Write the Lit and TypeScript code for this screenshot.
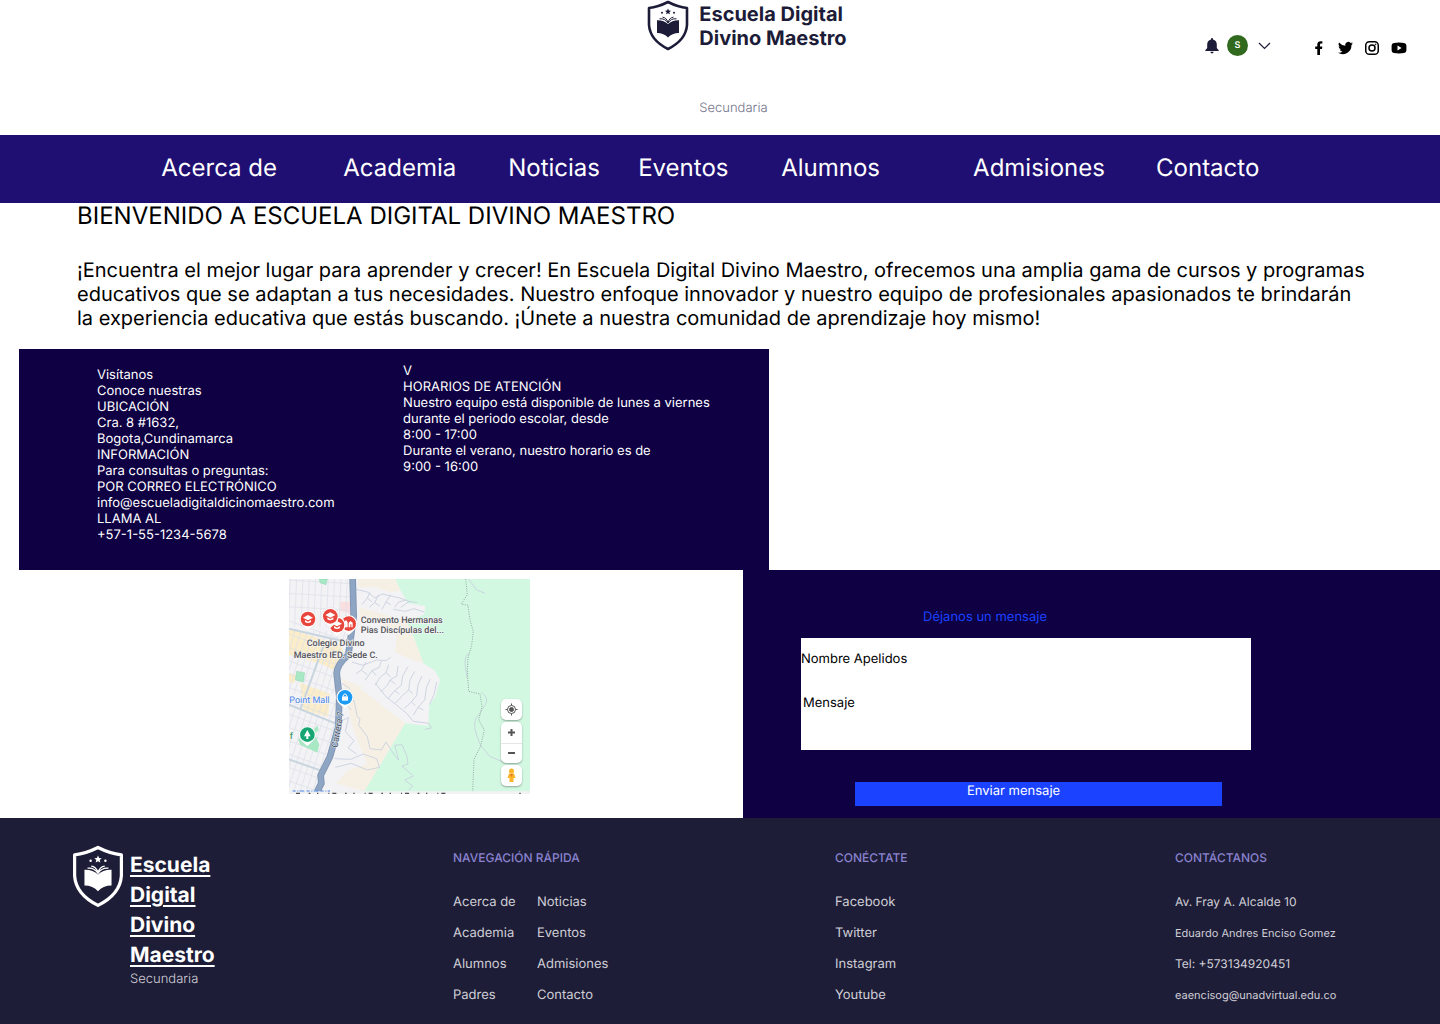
import { LitElement, html, svg, css } from "lit";
import { customElement } from "lit/decorators.js";

const SHIELD = svg`
  <path d="M21 2 Q31 7 40 8 V25 Q39 40 21 49 Q3 40 2 25 V8 Q11 7 21 2Z" fill="none" stroke="currentColor" stroke-width="2.6" stroke-linejoin="round"/>
  <path d="M21 8.6l.9 2 2.1.2-1.6 1.4.5 2.1-1.9-1.1-1.9 1.1.5-2.1-1.6-1.4 2.1-.2z" fill="currentColor"/>
  <circle cx="15" cy="12.8" r="1" fill="currentColor"/><circle cx="27" cy="12.8" r="1" fill="currentColor"/>
  <path d="M10 20.2 Q17 20 21 24 Q25 20 32 20.2 V33 Q25 33 21 37.6 Q17 33 10 33Z" fill="currentColor"/>
  <path d="M12.5 18.8 Q18 18.2 21 23 Q24 18.2 29.5 18.8 M15.5 17.2 Q19.5 17.5 21 22.5 Q22.5 17.5 26.5 17.2" fill="none" stroke="currentColor" stroke-width="1"/>`;

@customElement("school-map")
export class SchoolMap extends LitElement {
  static styles = css`
    :host { display: block; position: relative; }
    .canvas { display: block; width: 100%; height: 100%; }
    .label { font-family: Roboto, sans-serif; font-size: 27px; font-weight: 500; fill: #55555a; stroke: #f6f5f7; stroke-width: 4px; paint-order: stroke; }
    .place { fill: #4a86e8; font-weight: 400; }
    .park { fill: #3c9c6c; }
    .road { fill: #3f4856; stroke: #dfe5ee; stroke-width: 3px; font-weight: 400; }
    .controls { position: absolute; right: 8px; bottom: 8px; width: 21px; display: grid; gap: 2px; }
    .group { display: grid; background: #fff; border-radius: 5px; box-shadow: 0 1px 2px #0005; }
    .control { display: grid; place-items: center; width: 21px; height: 21px; padding: 0; border: 0; background: none; color: #555; }
    .control + .control { height: 20px; border-top: 1px solid #e6e6e6; }
  `;

  private streets() {
    const lines = [];
    for (let i = 0; i < 26; i++) {
      const x = 12 + i * 19;
      lines.push(svg`<path d="M${x} 20 l-6 150"/><path d="M${x - 5} 182 l-60 190"/><path d="M${x} 400 l-90 280"/>`);
    }
    for (let i = 0; i < 17; i++) {
      const y = 30 + i * 40;
      lines.push(svg`<path d="M20 ${y} l210 ${i < 3 ? 12 : 76}"/>`);
    }
    return lines;
  }

  private pin(x: number, y: number, color: string, glyph: unknown) {
    return svg`<g transform="translate(${x} ${y})">
      <path d="M0 35 L-14 22 A26 26 0 1 1 14 22Z" fill="#fff" stroke="#0002"/>
      <circle r="22" fill="${color}"/>${glyph}</g>`;
  }

  render() {
    const cap = svg`<path d="M-15 -4 L0 -12 L15 -4 L0 4Z M-9 3 V9 Q0 15 9 9 V3 L0 8Z" fill="#fff"/>`;
    return html`
      <svg class="canvas" viewBox="27 27 723 645" preserveAspectRatio="xMidYMid slice" role="img" aria-label="Mapa">
        <defs>
          <clipPath id="west"><path d="M27 27 H218 L221 140 L205 255 L172 290 L178 380 L172 470 L150 560 L120 620 L112 672 H27Z"/></clipPath>
        </defs>
        <path fill="#f3f2f5" d="M27 27H750V672H27Z"/>
        <path fill="#d3f8e2" d="M345 27 L362 62 L385 100 L436 108 L432 134 L378 152 L402 205 L430 280 L465 302 L480 330 L466 380 L448 405 L445 468 L375 460 L253 664 H750 V27Z"/>
        <path fill="#f6f0e4" d="M234 27 H345 L362 62 L330 66 L285 50 L236 54Z M238 112 L300 130 L378 152 L402 205 L430 280 L392 268 L345 246 L350 190 L300 160 L240 150Z M188 330 L236 352 L300 402 L375 460 L253 664 L168 640 L205 600 L262 582 L236 520 L214 460Z M180 325 L250 352 L210 362Z"/>
        <path fill="#fbdfe0" d="M180 95 H213 V132 L182 124Z"/>
        <g clip-path="url(#west)">
          <path fill="#fbedc9" d="M27 176 L182 226 L196 262 L160 300 L120 280 L27 254Z M60 338 L150 372 L144 440 L70 420Z M27 310 L50 316 L42 340 L27 336Z"/>
          <g fill="none" stroke="#dce0e8" stroke-width="2">${this.streets()}</g>
          <path fill="none" stroke="#c8d5df" stroke-width="6" d="M27 176 L190 214 M27 404 L166 460 M27 568 L140 608 M130 230 L60 420"/>
          <path fill="#a9e8c4" stroke="#74cba0" d="M50 304 L74 308 L70 336 L46 330Z M118 27 H142 L138 44 L120 38Z"/>
          <path fill="#a9e8c4" d="M100 480 L112 466 L116 480 L104 492 L118 524 L112 548 L60 524 L54 508 L66 500Z"/>
        </g>
        <g fill="none" stroke="#c6cfdd" stroke-width="2.5" stroke-linejoin="round">
          <path d="M228 58 L262 66 L285 84 L306 72 M246 104 L262 84 L270 66 M262 84 L276 96 M268 112 L284 98 L296 74 M284 98 L300 108 M306 118 L318 96 L332 74 M318 96 L332 104 M306 72 L360 84 L392 96 M344 112 L356 96 L378 90 M362 112 L388 94 L412 98 M340 118 L376 124 L402 116 L432 126"/>
          <path d="M216 276 L248 286 L290 270 L318 272 L332 262 M228 312 L244 300 L258 276 M244 300 L262 314 M256 330 L276 302 L298 292 L304 274 M276 302 L288 316 M286 346 L300 322 L318 308 L326 284 M318 308 L332 320 M302 366 L322 346 L330 330 L350 318 L354 288 M330 330 L346 342 M324 386 L344 362 L364 346 L368 318 L384 290 M344 362 L358 372 M346 400 L366 378 L386 360 L390 330 L404 304 M386 360 L398 370 M372 416 L394 396 L410 376 L414 344 L426 318 M394 396 L406 406 M400 436 L414 412 L434 390 L440 350 L450 328 M414 412 L430 420 M286 340 L318 380 L346 402 L380 430 L400 454 L446 460 L454 474 L434 478 M448 404 L462 374 L470 336"/>
          <path d="M196 372 L222 392 L232 440 L240 446 L236 466 L262 500 L270 536 L304 540 L318 516 L344 556 L356 570 L344 526 L366 524 L380 556 L384 582 L366 588 L400 618 L374 630 L398 648 L386 660"/>
          <path d="M186 452 L206 442 L196 484 L222 512 L204 534 L230 552 M164 566 L212 568 L250 552 L290 566 L298 592 L262 600 L214 580 L166 592 M186 340 L210 356 M196 400 L214 420"/>
          <path d="M566 27 L590 60 L615 70 M567 250 Q552 258 556 290 L562 326 M604 366 Q628 386 616 404 L598 432 Q574 454 590 496 L602 526 L630 560 L670 576"/>
        </g>
        <path fill="none" stroke="#7f9790" stroke-width="2.5" stroke-dasharray="3 4" d="M557 27 L562 74 L544 102 L564 106 L570 150 L580 184 L575 226 L564 264 L562 300 L566 364 L600 372 L606 410 L596 450 L613 480 L602 528 L582 568 L578 664"/>
        <path fill="none" stroke="#7d92b0" stroke-width="20" d="M218 27 L221 140 L205 255 Q172 282 170 310 L178 380 L175 470 L150 560 L122 616 L124 640 L112 664"/>
        <path fill="none" stroke="#8ea5c4" stroke-width="15" d="M218 27 L221 140 L205 255 Q172 282 170 310 L178 380 L175 470 L150 560 L122 616 L124 640 L112 664"/>
        <text class="label road" transform="translate(172 534) rotate(-80)">Carrera 7</text>
        ${this.pin(206, 161, "#e8453c", svg`<path d="M-13 11 V-4 L-8 -11 L-3 -4 V11Z M0 11 V-2 L5 -8 L12 -3 V11 H8 V2 H5 V11Z" fill="#fff"/>`)}
        ${this.pin(171, 165, "#e8453c", cap)}
        ${this.pin(84, 147, "#e8453c", cap)}
        ${this.pin(151, 139, "#e8453c", cap)}
        ${this.pin(195, 382, "#1a9bf5", svg`<path d="M-9 -3 H9 V10 H-9Z" fill="#fff"/><path d="M-5 -3 V-7 Q0 -14 5 -7 V-3" fill="none" stroke="#fff" stroke-width="3"/>`)}
        ${this.pin(82, 494, "#17a673", svg`<path d="M0 -14 L10 5 H3 V13 H-3 V5 H-10Z" fill="#fff"/>`)}
        <text class="label" x="242" y="160">Convento Hermanas</text>
        <text class="label" x="242" y="189">Pias Discípulas del...</text>
        <text class="label" x="80" y="229">Colegio Divino</text>
        <text class="label" x="41" y="264">Maestro IED. Sede C.</text>
        <text class="label place" x="28" y="398">Point Mall</text>
        <text class="label park" x="29" y="506">f</text>
        <path fill="#f1f2f3" d="M27 664H750V672H27Z"/>
        <path fill="none" stroke="#4a86e8" stroke-width="3" stroke-dasharray="9 5 3 4 14 7" d="M38 663H150"/>
        <path fill="none" stroke="#4d4d52" stroke-width="4" stroke-dasharray="12 26 5 20 4 30 3 9" d="M48 670H520M718 670H722"/>
      </svg>
      <div class="controls">
        <div class="group"><button class="control" aria-label="Mi ubicación">
          <svg width="13" height="13" viewBox="0 0 13 13" fill="none" stroke="currentColor"><circle cx="6.5" cy="6.5" r="4"/><circle cx="6.5" cy="6.5" r="2" fill="currentColor"/><path d="M6.5 .5v2M6.5 10.5v2M.5 6.5h2M10.5 6.5h2"/></svg>
        </button></div>
        <div class="group">
          <button class="control" aria-label="Acercar"><svg width="9" height="9" viewBox="0 0 9 9" stroke="currentColor" stroke-width="2"><path d="M1 4.5h7M4.5 1v7"/></svg></button>
          <button class="control" aria-label="Alejar"><svg width="9" height="9" viewBox="0 0 9 9" stroke="currentColor" stroke-width="2"><path d="M1 4h7"/></svg></button>
        </div>
        <div class="group"><button class="control" aria-label="Vista de calle">
          <svg width="11" height="15" viewBox="0 0 11 15" fill="#fbb428"><path d="M3 5.5H8L9.5 10H7.5V14H3.5V10H1.5Z"/><circle cx="5.5" cy="3" r="2.5"/><path d="M4 6h3l-1.5 3z" fill="#e07a18"/></svg>
        </button></div>
      </div>
    `;
  }
}

@customElement("app-root")
export class AppRoot extends LitElement {
  static styles = css`
    :host { display: block; background: #fff; color: #000; font-family: Inter, "Liberation Sans", sans-serif; font-size: 13px; line-height: 16px; text-rendering: geometricPrecision; }
    *, *::before, *::after { box-sizing: border-box; }
    a { color: inherit; text-decoration: none; }
    h1, h2, p, ul { margin: 0; padding: 0; font-weight: 400; list-style: none; }
    button, input, textarea { font: inherit; color: inherit; border: 0; padding: 0; background: none; text-rendering: inherit; }

    .header { display: grid; grid-template-columns: 12fr auto 11fr; min-height: 135px; }
    .brand { grid-column: 2; display: grid; grid-template-columns: auto auto; column-gap: 10px; align-content: start; color: #1d1c38; }
    .brand-name { padding-top: 2px; font-size: 20px; line-height: 24px; font-weight: 700; }
    .brand-level { grid-column: 2; padding-top: 48px; font-size: 13px; font-weight: 300; color: #74748a; }
    .account { display: flex; justify-content: flex-end; align-items: center; align-self: start; padding: 35px 33px 0 0; }
    .icon { display: grid; }
    .bell { margin-right: 8px; color: #1d1c38; }
    .avatar { display: grid; place-items: center; width: 21px; height: 21px; margin-right: 10px; border-radius: 50%; background: #316a1e; color: #fff; font-size: 9px; font-weight: 600; }
    .chevron { margin-right: 40px; color: #1d1c38; }
    .social { display: flex; gap: 11px; padding-top: 4px; }

    .nav { display: grid; grid-template-columns: 182fr 165fr 130fr 143fr 192fr 183fr 284fr; padding: 18px 0 20px 11.2%; background: #1f0f72; color: #fff; font-size: 24px; line-height: 30px; }

    .welcome { padding: 0 72px 19px 77px; font-size: 20px; line-height: 24px; }
    .welcome-title { padding-bottom: 30px; font-size: 24px; line-height: 25px; }

    .info { display: grid; grid-template-columns: 306fr 366fr; width: 52.1%; min-height: 221px; margin-left: 19px; padding: 14px 0 0 78px; background: #0e0043; color: #fff; }
    .visit { padding-top: 4px; }

    .contact { display: grid; grid-template-columns: 743fr 697fr; min-height: 248px; }
    .map { width: 241px; height: 215px; margin: 9px 0 0 289px; }
    .message { display: grid; align-content: start; padding: 39px 189px 12px 58px; background: #0e0043; }
    .message-title { padding-left: 122px; font-size: 13px; color: #1b43ff; }
    .fields { display: grid; gap: 28px; align-content: start; min-height: 112px; margin-top: 13px; padding-top: 13px; background: #fff; }
    .field { display: flex; gap: 8px; }
    .field-last { padding-left: 2px; }
    .field-input { flex: 1; min-width: 0; height: 16px; outline: 0; resize: none; }
    .field-area { height: 40px; }
    .send { height: 24px; margin: 32px 29px 0 54px; padding: 0 0 6px 112px; background: #1b43ff; color: #fff; line-height: 16px; text-align: left; }

    .footer { display: grid; grid-template-columns: 381fr 382fr 340fr 265fr; min-height: 206px; padding: 27px 0 20px 72px; background: #1e1d37; color: #cfced6; }
    .footer-brand { display: flex; gap: 6px; align-items: flex-start; color: #fff; }
    .footer-name { display: block; width: 90px; padding-top: 6px; font-size: 21px; line-height: 30px; font-weight: 700; text-decoration: underline; text-underline-offset: 3px; }
    .footer-level { font-weight: 300; color: #cfced6; }
    .footer-title { padding: 5px 0 28px; font-size: 12px; font-weight: 500; color: #8a83d0; }
    .links { display: grid; gap: 15px; justify-content: start; }
    .links-pair { grid-template-columns: 84px auto; column-gap: 0; }
    .details { font-size: 12px; }
    .compact { font-size: 11px; }
  `;

  private nav = ["Acerca de", "Academia", "Noticias", "Eventos", "Alumnos", "Admisiones", "Contacto"];
  private quick = ["Acerca de", "Noticias", "Academia", "Eventos", "Alumnos", "Admisiones", "Padres", "Contacto"];
  private networks = ["Facebook", "Twitter", "Instagram", "Youtube"];

  private link(text: string) {
    return html`<li><a href="#">${text}</a></li>`;
  }

  render() {
    return html`
      <header class="header">
        <a class="brand" href="#">
          <svg width="42" height="52" viewBox="0 0 42 52">${SHIELD}</svg>
          <span class="brand-name">Escuela Digital<br>Divino Maestro</span>
          <span class="brand-level">Secundaria</span>
        </a>
        <div class="account">
          <button class="icon bell" aria-label="Notificaciones">
            <svg width="14" height="16" viewBox="0 0 14 16" fill="currentColor"><path d="M7 0a1 1 0 0 1 1 1v.6c2.5.6 3.8 2.6 3.8 5V10l1.9 2.2V13H.3v-.8L2.2 10V6.6c0-2.4 1.3-4.4 3.8-5V1a1 1 0 0 1 1-1zM5.4 13.8h3.2a1.6 1.6 0 0 1-3.2 0z"/></svg>
          </button>
          <span class="avatar">S</span>
          <button class="icon chevron" aria-label="Abrir menú">
            <svg width="13" height="8" viewBox="0 0 13 8" fill="none" stroke="currentColor" stroke-width="1.2"><path d="M1 1l5.5 5.5L12 1"/></svg>
          </button>
          <div class="social">
            <a class="icon" href="#" aria-label="Facebook"><svg width="16" height="16" viewBox="0 0 16 16"><path d="M6.3 15V8.9H4.2V6.4h2.1V4.6C6.3 2.4 7.6 1.2 9.6 1.2c.9 0 1.8.2 1.8.2v2h-1c-1 0-1.4.6-1.4 1.3v1.7h2.3L11 8.9H9V15z"/></svg></a>
            <a class="icon" href="#" aria-label="Twitter"><svg width="15" height="16" viewBox="0 0 24 24"><path d="M24 4.6a10 10 0 0 1-2.8.8 5 5 0 0 0 2.1-2.7 10 10 0 0 1-3.1 1.2 4.9 4.9 0 0 0-8.4 4.5A14 14 0 0 1 1.7 3.2a4.9 4.9 0 0 0 1.5 6.6 5 5 0 0 1-2.2-.6 4.9 4.9 0 0 0 3.9 4.9 5 5 0 0 1-2.2.1 4.9 4.9 0 0 0 4.6 3.4A9.9 9.9 0 0 1 0 19.5 14 14 0 0 0 21.5 7.1 10 10 0 0 0 24 4.6z"/></svg></a>
            <a class="icon" href="#" aria-label="Instagram"><svg width="16" height="16" viewBox="0 0 16 16" fill="none" stroke="#000" stroke-width="1.5"><rect x="1.75" y="1.75" width="12.5" height="12.5" rx="3.6"/><circle cx="8" cy="8" r="3"/><circle cx="11.6" cy="4.4" r=".5" fill="#000" stroke-width=".6"/></svg></a>
            <a class="icon" href="#" aria-label="Youtube"><svg width="16" height="16" viewBox="0 0 16 16"><path fill-rule="evenodd" d="M3 2.9Q8 2.3 13 2.9 15.3 3.1 15.4 5.5V10.5Q15.3 12.9 13 13.1 8 13.7 3 13.1.7 12.9.6 10.5V5.5Q.7 3.1 3 2.9zM6.5 5.6v4.8L10.6 8z"/></svg></a>
          </div>
        </div>
      </header>

      <nav class="nav">${this.nav.map((n) => html`<a href="#">${n}</a>`)}</nav>

      <section class="welcome">
        <h1 class="welcome-title">BIENVENIDO A ESCUELA DIGITAL DIVINO MAESTRO</h1>
        <p>¡Encuentra el mejor lugar para aprender y crecer! En Escuela Digital Divino Maestro, ofrecemos una amplia gama de cursos y programas educativos que se adaptan a tus necesidades. Nuestro enfoque innovador y nuestro equipo de profesionales apasionados te brindarán la experiencia educativa que estás buscando. ¡Únete a nuestra comunidad de aprendizaje hoy mismo!</p>
      </section>

      <section class="info">
        <p class="visit">Visítanos<br>Conoce nuestras<br>UBICACIÓN<br>Cra. 8 #1632,<br>Bogota,Cundinamarca<br>INFORMACIÓN<br>Para consultas o preguntas:<br>POR CORREO ELECTRÓNICO<br>info@escueladigitaldicinomaestro.com<br>LLAMA AL<br>+57-1-55-1234-5678</p>
        <p>V<br>HORARIOS DE ATENCIÓN<br>Nuestro equipo está disponible de lunes a viernes<br>durante el periodo escolar, desde<br>8:00 - 17:00<br>Durante el verano, nuestro horario es de<br>9:00 - 16:00</p>
      </section>

      <section class="contact">
        <school-map class="map"></school-map>
        <form class="message" @submit=${(e: Event) => e.preventDefault()}>
          <h2 class="message-title">Déjanos un mensaje</h2>
          <div class="fields">
            <div class="field"><label for="name">Nombre Apelidos</label><input class="field-input" id="name" type="text"></div>
            <div class="field field-last"><label for="text">Mensaje</label><textarea class="field-input field-area" id="text"></textarea></div>
          </div>
          <button class="send" type="submit">Enviar mensaje</button>
        </form>
      </section>

      <footer class="footer">
        <a class="footer-brand" href="#">
          <svg width="52" height="64" viewBox="0 0 42 52">${SHIELD}</svg>
          <div><span class="footer-name">Escuela Digital Divino Maestro</span><p class="footer-level">Secundaria</p></div>
        </a>
        <div>
          <h2 class="footer-title">NAVEGACIÓN RÁPIDA</h2>
          <ul class="links links-pair">${this.quick.map((t) => this.link(t))}</ul>
        </div>
        <div>
          <h2 class="footer-title">CONÉCTATE</h2>
          <ul class="links">${this.networks.map((t) => this.link(t))}</ul>
        </div>
        <div>
          <h2 class="footer-title">CONTÁCTANOS</h2>
          <ul class="links details">
            <li>Av. Fray A. Alcalde 10</li>
            <li class="compact">Eduardo Andres Enciso Gomez</li>
            <li><a href="#">Tel: +573134920451</a></li>
            <li class="compact"><a href="#">eaencisog@unadvirtual.edu.co</a></li>
          </ul>
        </div>
      </footer>
    `;
  }
}
